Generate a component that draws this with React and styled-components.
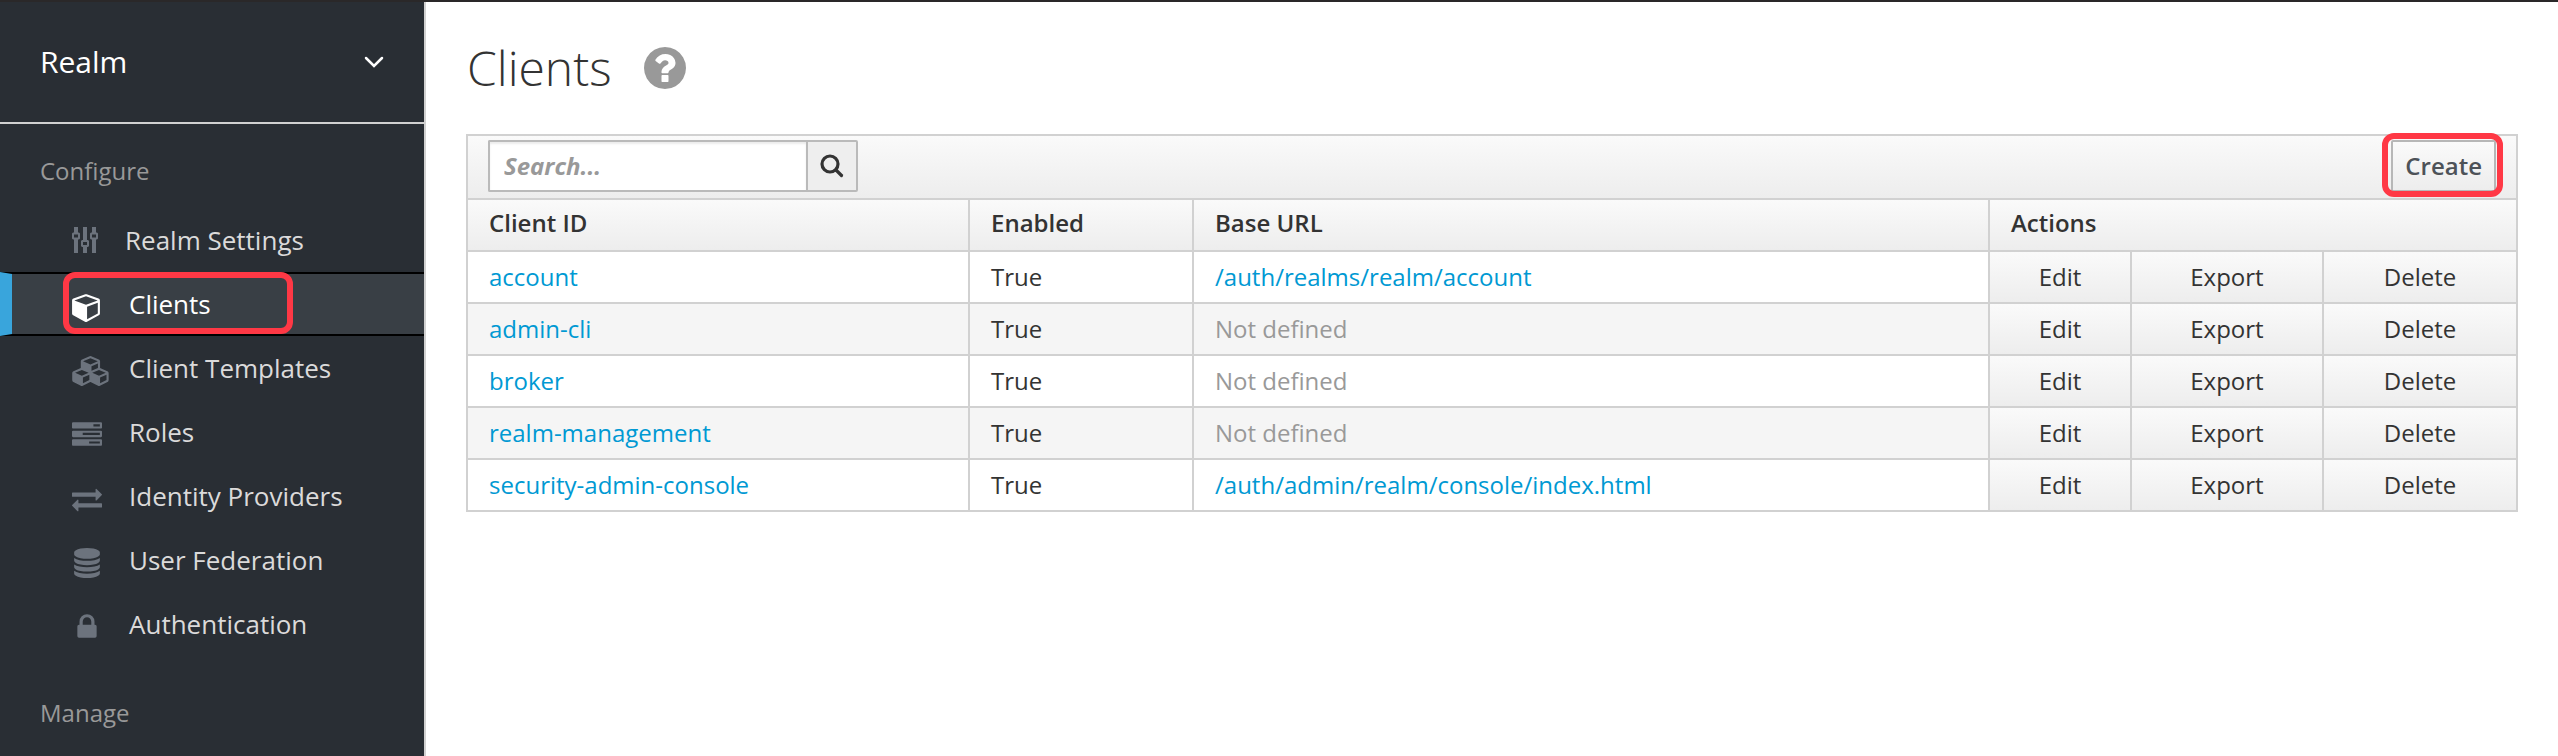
import React from "react";
import styled, { createGlobalStyle, css } from "styled-components";

const GlobalStyle = createGlobalStyle`
  *, *::before, *::after { box-sizing: border-box; }
  body {
    margin: 0;
    background: #fff;
    color: #333;
    font-family: "Open Sans", "Noto Sans", sans-serif;
    font-size: 24px;
    line-height: 36px;
  }
  button, input { font: inherit; color: inherit; margin: 0; }
  a { color: inherit; text-decoration: none; }
`;

const barGradient = css`
  background: linear-gradient(to bottom, #fafafa, #ededed);
`;

/* Red outline that marks the step to follow */
const highlight = css`
  position: relative;
  &::after {
    content: "";
    position: absolute;
    border: 6px solid #ff3845;
    border-radius: 12px;
    pointer-events: none;
  }
`;

const Page = styled.div`
  display: flex;
  min-height: 100vh;
  border-top: 2px solid #2a2829;
`;

const Sidebar = styled.aside`
  flex: none;
  width: 426px;
  background: #292e34;
  border-right: 2px solid #d1d1d1;
`;

const RealmSelector = styled.button`
  display: flex;
  align-items: center;
  justify-content: space-between;
  width: 100%;
  height: 122px;
  padding: 0 40px;
  border: 0;
  border-bottom: 2px solid #d1d1d1;
  background: none;
  color: #fff;
  font-size: 30px;
`;

const SectionTitle = styled.h2`
  margin: 0;
  padding: 28px 40px 18px;
  color: #999;
  font-size: 24px;
  font-weight: 400;
  line-height: 38px;
`;

const NavList = styled.ul`
  margin: 0 0 10px;
  padding: 0;
  list-style: none;
`;

const NavLink = styled.a`
  display: flex;
  align-items: center;
  height: 64px;
  padding-left: 60px;
  border: 0 solid #000;
  border-width: 2px 0;
  border-left: 12px solid transparent;
  border-top-color: ${(p) => (p.$active ? "#000" : "transparent")};
  border-bottom-color: ${(p) => (p.$active ? "#000" : "transparent")};
  border-left-color: ${(p) => (p.$active ? "#39a5dc" : "transparent")};
  background: ${(p) => (p.$active ? "#393f45" : "none")};
  color: ${(p) => (p.$active ? "#fff" : "#dbdada")};
  font-size: 26px;
  svg { color: ${(p) => (p.$active ? "#fff" : "#6c737d")}; }
`;

const NavMark = styled.span`
  display: flex;
  align-items: center;
  ${(p) =>
    p.$marked &&
    css`
      ${highlight}
      &::after { inset: -14px -82px -12px -9px; }
    `}
`;

const NavIcon = styled.span`
  flex: none;
  width: ${(p) => (p.$narrow ? "53px" : "57px")};
  padding-top: ${(p) => (p.$narrow ? "0" : "6px")};
`;

const Glyph = styled.svg`
  display: block;
  flex: none;
  fill: currentColor;
`;

const Main = styled.main`
  flex: 1;
  min-width: 0;
  padding: 32px 40px 40px;
`;

const TitleRow = styled.header`
  display: flex;
  align-items: center;
  gap: 32px;
  margin-bottom: 32px;
  padding-left: 1px;
`;

const Title = styled.h1`
  margin: 0;
  font-size: 48px;
  font-weight: 300;
  line-height: 68px;
`;

const HelpButton = styled.button`
  display: flex;
  padding: 0;
  border: 0;
  background: none;
  color: #999;
`;

const Toolbar = styled.div`
  display: flex;
  align-items: flex-start;
  justify-content: space-between;
  height: 64px;
  padding: 4px 20px;
  border: 2px solid #d1d1d1;
  border-bottom: 0;
  ${barGradient}
`;

const SearchForm = styled.form`
  display: flex;
  width: 370px;
  height: 52px;
`;

const SearchInput = styled.input`
  flex: 1;
  min-width: 0;
  padding: 0 14px;
  border: 2px solid #bababa;
  border-right: 0;
  border-radius: 2px 0 0 2px;
  background: #fff;
  box-shadow: inset 0 2px 2px rgba(3, 3, 3, 0.08);
  outline: 0;
  &::placeholder {
    color: #999;
    font-style: italic;
    font-weight: 700;
    opacity: 1;
  }
`;

const SearchButton = styled.button`
  display: flex;
  align-items: center;
  justify-content: center;
  width: 52px;
  padding: 0;
  border: 2px solid #bababa;
  border-radius: 0 2px 2px 0;
  background: #eee;
`;

const CreateButton = styled.button`
  height: 52px;
  padding: 0 12px;
  border: 2px solid #b7b7b7;
  border-radius: 2px;
  ${barGradient}
  color: #4d5258;
  font-weight: 600;
  ${highlight}
  &::after { inset: -9px -9px -7px -11px; }
`;

const Table = styled.table`
  width: 100%;
  table-layout: fixed;
  border-collapse: collapse;
  border: 2px solid #d1d1d1;
`;

const Col = styled.col`
  width: ${(p) => p.$width || "auto"};
`;

const HeadCell = styled.th`
  height: 52px;
  padding: 0 21px 4px;
  border: 2px solid #d1d1d1;
  ${barGradient}
  font-weight: 600;
  text-align: left;
`;

const Row = styled.tr`
  background: ${(p) => (p.$striped ? "#f5f5f5" : "#fff")};
`;

const Cell = styled.td`
  height: 52px;
  padding: 0 21px;
  border: 2px solid #d1d1d1;
`;

const ActionCell = styled.td`
  height: 52px;
  padding: 0;
  border: 2px solid #d1d1d1;
  ${barGradient}
`;

const ActionButton = styled.button`
  display: block;
  width: 100%;
  height: 50px;
  padding: 0;
  border: 0;
  background: none;
`;

const TextLink = styled.a`
  color: #0099d3;
`;

const Muted = styled.span`
  color: #999;
`;

const ICONS = {
  cube: [1664, "M896 1629l640-349v-636l-640 233v752zM832 764l698-254-698-254-698 254zM1664 512v768q0 35-18 65t-49 47l-704 384q-28 16-61 16t-61-16l-704-384q-31-17-49-47t-18-65v-768q0-40 23-73t61-47l704-256q22-8 44-8t44 8l704 256q38 14 61 47t23 73z"],
  cubes: [2304, "M640 1632l384-192v-314l-384 164v342zm-64-454l404-173-404-173-404 173zm1088 454l384-192v-314l-384 164v342zm-64-454l404-173-404-173-404 173zm-448-293l384-165v-266l-384 164v267zm-64-379l441-189-441-189-441 189zm1088 518v416q0 36-19 67t-52 47l-448 224q-25 14-57 14t-57-14l-448-224q-4-2-7-4-2 2-7 4l-448 224q-25 14-57 14t-57-14l-448-224q-33-16-52-47t-19-67v-416q0-38 21.5-70t56.5-48l434-186v-400q0-38 21.5-70t56.5-48l448-192q23-10 50-10t50 10l448 192q35 16 56.5 48t21.5 70v400l434 186q36 16 57 48t21 70z"],
  tasks: [1792, "M1024 1408h640v-128h-640v128zm-384-512h1024v-128h-1024v128zm640-512h384v-128h-384v128zm512 832v256q0 26-19 45t-45 19h-1664q-26 0-45-19t-19-45v-256q0-26 19-45t45-19h1664q26 0 45 19t19 45zm0-512v256q0 26-19 45t-45 19h-1664q-26 0-45-19t-19-45v-256q0-26 19-45t45-19h1664q26 0 45 19t19 45zm0-512v256q0 26-19 45t-45 19h-1664q-26 0-45-19t-19-45v-256q0-26 19-45t45-19h1664q26 0 45 19t19 45z"],
  exchange: [1792, "M1792 1184v192q0 13-9.5 22.5t-22.5 9.5h-1376v192q0 13-9.5 22.5t-22.5 9.5q-12 0-24-10l-319-320q-9-9-9-22 0-14 9-23l320-320q9-9 23-9 13 0 22.5 9.5t9.5 22.5v192h1376q13 0 22.5 9.5t9.5 22.5zm0-544q0 14-9 23l-320 320q-9 9-23 9-13 0-22.5-9.5t-9.5-22.5v-192h-1376q-13 0-22.5-9.5t-9.5-22.5v-192q0-13 9.5-22.5t22.5-9.5h1376v-192q0-14 9-23t23-9q12 0 24 10l319 319q9 9 9 23z"],
  database: [1792, "M896 768q237 0 443-43t325-127v170q0 69-103 128t-280 93.5-385 34.5-385-34.5-280-93.5-103-128v-170q119 84 325 127t443 43zm0 768q237 0 443-43t325-127v170q0 69-103 128t-280 93.5-385 34.5-385-34.5-280-93.5-103-128v-170q119 84 325 127t443 43zm0-384q237 0 443-43t325-127v170q0 69-103 128t-280 93.5-385 34.5-385-34.5-280-93.5-103-128v-170q119 84 325 127t443 43zm0-1152q208 0 385 34.5t280 93.5 103 128v128q0 69-103 128t-280 93.5-385 34.5-385-34.5-280-93.5-103-128v-128q0-69 103-128t280-93.5 385-34.5z"],
  lock: [1792, "M640 768h512v-192q0-106-75-181t-181-75-181 75-75 181v192zm832 96v576q0 40-28 68t-68 28h-960q-40 0-68-28t-28-68v-576q0-40 28-68t68-28h32v-192q0-184 132-316t316-132 316 132 132 316v192h32q40 0 68 28t28 68z"],
};

function Icon({ name }) {
  const [width, d] = ICONS[name];
  return (
    <Glyph viewBox={`0 0 ${width} 1792`} width={Math.round((width * 30) / 1792)} height="30" aria-hidden="true">
      <path d={d} />
    </Glyph>
  );
}

function SlidersIcon() {
  return (
    <Glyph viewBox="0 0 26 26" width="26" height="26" aria-hidden="true">
      <path d="M2 0h4v6H2zM2 12h4v14H2zM11 0h4v13h-4zM11 20h4v6h-4zM20 0h4v6h-4zM20 12h4v14h-4z" />
      <path
        fillRule="evenodd"
        d="M1 5.500h6l1 1v5l-1 1h-6l-1-1v-5zM2 7.500v3h4v-3zM10 13h6l1 1v5l-1 1h-6l-1-1v-5zM11 15v3h4v-3zM19 5.500h6l1 1v5l-1 1h-6l-1-1v-5zM20 7.500v3h4v-3z"
      />
    </Glyph>
  );
}

function HelpIcon() {
  return (
    <Glyph viewBox="128 128 1536 1536" width="42" height="42" aria-hidden="true">
      <path d="M1024 1376v-192q0-14-9-23t-23-9h-192q-14 0-23 9t-9 23v192q0 14 9 23t23 9h192q14 0 23-9t9-23zm256-672q0-88-55.5-163t-138.5-116-170-41q-243 0-371 213-15 24 8 42l132 100q7 6 19 6 16 0 25-12 53-68 86-92 34-24 86-24 48 0 85.5 26t37.5 59q0 38-20 61t-68 45q-63 28-115.5 86.5t-52.5 125.5v36q0 14 9 23t23 9h192q14 0 23-9t9-23q0-19 21.5-49.5t54.5-49.5q32-18 49-28.5t46-35 44.5-48 28-60.5 12.5-81zm384 192q0 209-103 385.5t-279.5 279.5-385.5 103-385.5-103-279.5-279.5-103-385.5 103-385.5 279.5-279.5 385.5-103 385.5 103 279.5 279.5 103 385.5z" />
    </Glyph>
  );
}

const NAV = [
  { label: "Realm Settings", icon: "sliders" },
  { label: "Clients", icon: "cube", active: true },
  { label: "Client Templates", icon: "cubes" },
  { label: "Roles", icon: "tasks" },
  { label: "Identity Providers", icon: "exchange" },
  { label: "User Federation", icon: "database" },
  { label: "Authentication", icon: "lock" },
];

const CLIENTS = [
  { id: "account", url: "/auth/realms/realm/account" },
  { id: "admin-cli" },
  { id: "broker" },
  { id: "realm-management" },
  { id: "security-admin-console", url: "/auth/admin/realm/console/index.html" },
];

const ACTIONS = ["Edit", "Export", "Delete"];

export default function App() {
  return (
    <>
      <GlobalStyle />
      <Page>
        <Sidebar>
          <RealmSelector type="button">
            Realm
            <Glyph viewBox="0 0 20 12" width="20" height="12" aria-hidden="true">
              <path d="M2 2l8 8 8-8" fill="none" stroke="currentColor" strokeWidth="2.5" strokeLinecap="round" />
            </Glyph>
          </RealmSelector>
          <nav>
            <SectionTitle>Configure</SectionTitle>
            <NavList>
              {NAV.map((item) => (
                <li key={item.label}>
                  <NavLink href="#" $active={item.active} aria-current={item.active ? "page" : undefined}>
                    <NavMark $marked={item.active}>
                      <NavIcon $narrow={item.icon === "sliders"}>
                        {item.icon === "sliders" ? <SlidersIcon /> : <Icon name={item.icon} />}
                      </NavIcon>
                      {item.label}
                    </NavMark>
                  </NavLink>
                </li>
              ))}
            </NavList>
            <SectionTitle>Manage</SectionTitle>
          </nav>
        </Sidebar>
        <Main>
          <TitleRow>
            <Title>Clients</Title>
            <HelpButton type="button" aria-label="Help">
              <HelpIcon />
            </HelpButton>
          </TitleRow>
          <Toolbar>
            <SearchForm onSubmit={(e) => e.preventDefault()}>
              <SearchInput type="text" placeholder="Search..." aria-label="Search" />
              <SearchButton type="submit" aria-label="Search">
                <Glyph viewBox="0 0 24 24" width="24" height="24" aria-hidden="true">
                  <g fill="none" stroke="currentColor" strokeLinecap="round">
                    <circle cx="10" cy="10" r="8" strokeWidth="3.2" />
                    <path d="M16 16l5.500 5.500" strokeWidth="3.200" />
                  </g>
                </Glyph>
              </SearchButton>
            </SearchForm>
            <CreateButton type="button">Create</CreateButton>
          </Toolbar>
          <Table>
            <colgroup>
              <Col $width="502px" />
              <Col $width="224px" />
              <Col />
              <Col $width="142px" />
              <Col $width="192px" />
              <Col $width="194px" />
            </colgroup>
            <thead>
              <tr>
                <HeadCell scope="col">Client ID</HeadCell>
                <HeadCell scope="col">Enabled</HeadCell>
                <HeadCell scope="col">Base URL</HeadCell>
                <HeadCell scope="colgroup" colSpan={3}>Actions</HeadCell>
              </tr>
            </thead>
            <tbody>
              {CLIENTS.map((client, i) => (
                <Row key={client.id} $striped={i % 2 === 1}>
                  <Cell><TextLink href="#">{client.id}</TextLink></Cell>
                  <Cell>True</Cell>
                  <Cell>
                    {client.url ? <TextLink href="#">{client.url}</TextLink> : <Muted>Not defined</Muted>}
                  </Cell>
                  {ACTIONS.map((action) => (
                    <ActionCell key={action}>
                      <ActionButton type="button">{action}</ActionButton>
                    </ActionCell>
                  ))}
                </Row>
              ))}
            </tbody>
          </Table>
        </Main>
      </Page>
    </>
  );
}
